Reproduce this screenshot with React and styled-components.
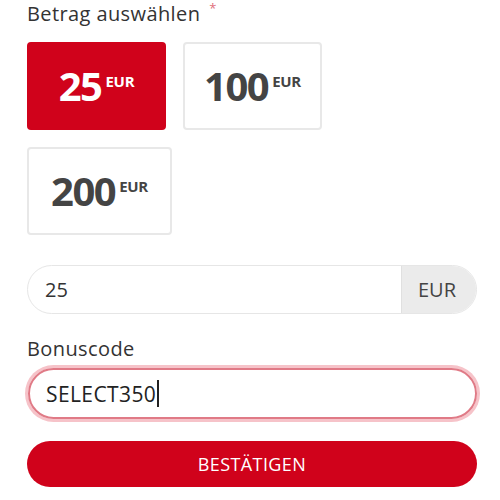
import React from "react";
import styled, { createGlobalStyle } from "styled-components";

const Global = createGlobalStyle`
  html, body { margin: 0; padding: 0; background: #fff; }
  body { font-family: "Open Sans", "Noto Sans", sans-serif; color: #333; }
`;

const Page = styled.div`
  width: 450px;
  padding: 0 23px 0 27px;
  display: flex;
  flex-direction: column;
`;

const Label = styled.div`
  font-size: 20px;
  letter-spacing: 0.4px;
  line-height: 28px;
  color: #333;
  margin-top: ${(p) => p.$mt || 0}px;
`;

const Req = styled.sup`
  color: #e0707c;
  font-size: 13px;
  margin-left: 9px;
  vertical-align: top;
  position: relative;
  top: -6px;
`;

const Tiles = styled.div`
  display: flex;
  flex-wrap: wrap;
  gap: 17px;
  margin-top: 14px;
`;

const Tile = styled.div`
  box-sizing: border-box;
  min-width: ${(p) => (p.$wide ? 145 : 139)}px;
  height: 88px;
  padding: 0 19px;
  border-radius: 4px;
  display: flex;
  align-items: center;
  justify-content: center;
  background: ${(p) => (p.$active ? "#d0021b" : "#fff")};
  border: 2px solid ${(p) => (p.$active ? "#d0021b" : "#e8e8e8")};
  color: ${(p) => (p.$active ? "#fff" : "#444")};
  gap: 4px;
`;

const Amount = styled.span`
  font-size: 40px;
  font-weight: 700;
  letter-spacing: -1.5px;
  line-height: 1;
`;

const Cur = styled.span`
  font-size: 15px;
  font-weight: 700;
  letter-spacing: -0.3px;
  align-self: flex-start;
  margin-top: 27px;
`;

const Group = styled.div`
  box-sizing: border-box;
  display: flex;
  height: 49px;
  margin-top: 30px;
  border: 1.5px solid #e6e6e6;
  border-radius: 25px;
  overflow: hidden;
`;

const Field = styled.div`
  flex: 1;
  display: flex;
  align-items: center;
  padding-left: 17px;
  font-size: 20px;
  color: #333;
`;

const Addon = styled.div`
  width: 70px;
  background: #ebebeb;
  border-left: 1px solid #e0e0e0;
  display: flex;
  align-items: center;
  justify-content: center;
  font-size: 20px;
  color: #444;
  padding-right: 4px;
`;

const CodeInput = styled.div`
  box-sizing: border-box;
  height: 51px;
  margin-top: 5px;
  margin-left: 1px;
  border: 2px solid #e07a86;
  box-shadow: 0 0 0 3px #f6c3c9;
  border-radius: 26px;
  display: flex;
  align-items: center;
  padding-left: 16px;
  font-size: 21px;
  letter-spacing: 0.4px;
  color: #222;
`;

const Caret = styled.span`
  display: inline-block;
  width: 1.5px;
  height: 27px;
  background: #222;
  margin-left: 1px;
`;

const Button = styled.button`
  margin-top: 22px;
  height: 46px;
  border: none;
  border-radius: 23px;
  background: #d0021b;
  color: #fff;
  font-family: inherit;
  font-size: 18px;
  letter-spacing: 0.4px;
`;

export default function App() {
  return (
    <>
      <Global />
      <Page>
        <Label>
          Betrag auswählen<Req>*</Req>
        </Label>
        <Tiles>
          <Tile $active>
            <Amount>25</Amount>
            <Cur>EUR</Cur>
          </Tile>
          <Tile>
            <Amount>100</Amount>
            <Cur>EUR</Cur>
          </Tile>
          <Tile $wide>
            <Amount>200</Amount>
            <Cur>EUR</Cur>
          </Tile>
        </Tiles>
        <Group>
          <Field>25</Field>
          <Addon>EUR</Addon>
        </Group>
        <Label $mt={21}>Bonuscode</Label>
        <CodeInput>
          SELECT350
          <Caret />
        </CodeInput>
        <Button>BESTÄTIGEN</Button>
      </Page>
    </>
  );
}
